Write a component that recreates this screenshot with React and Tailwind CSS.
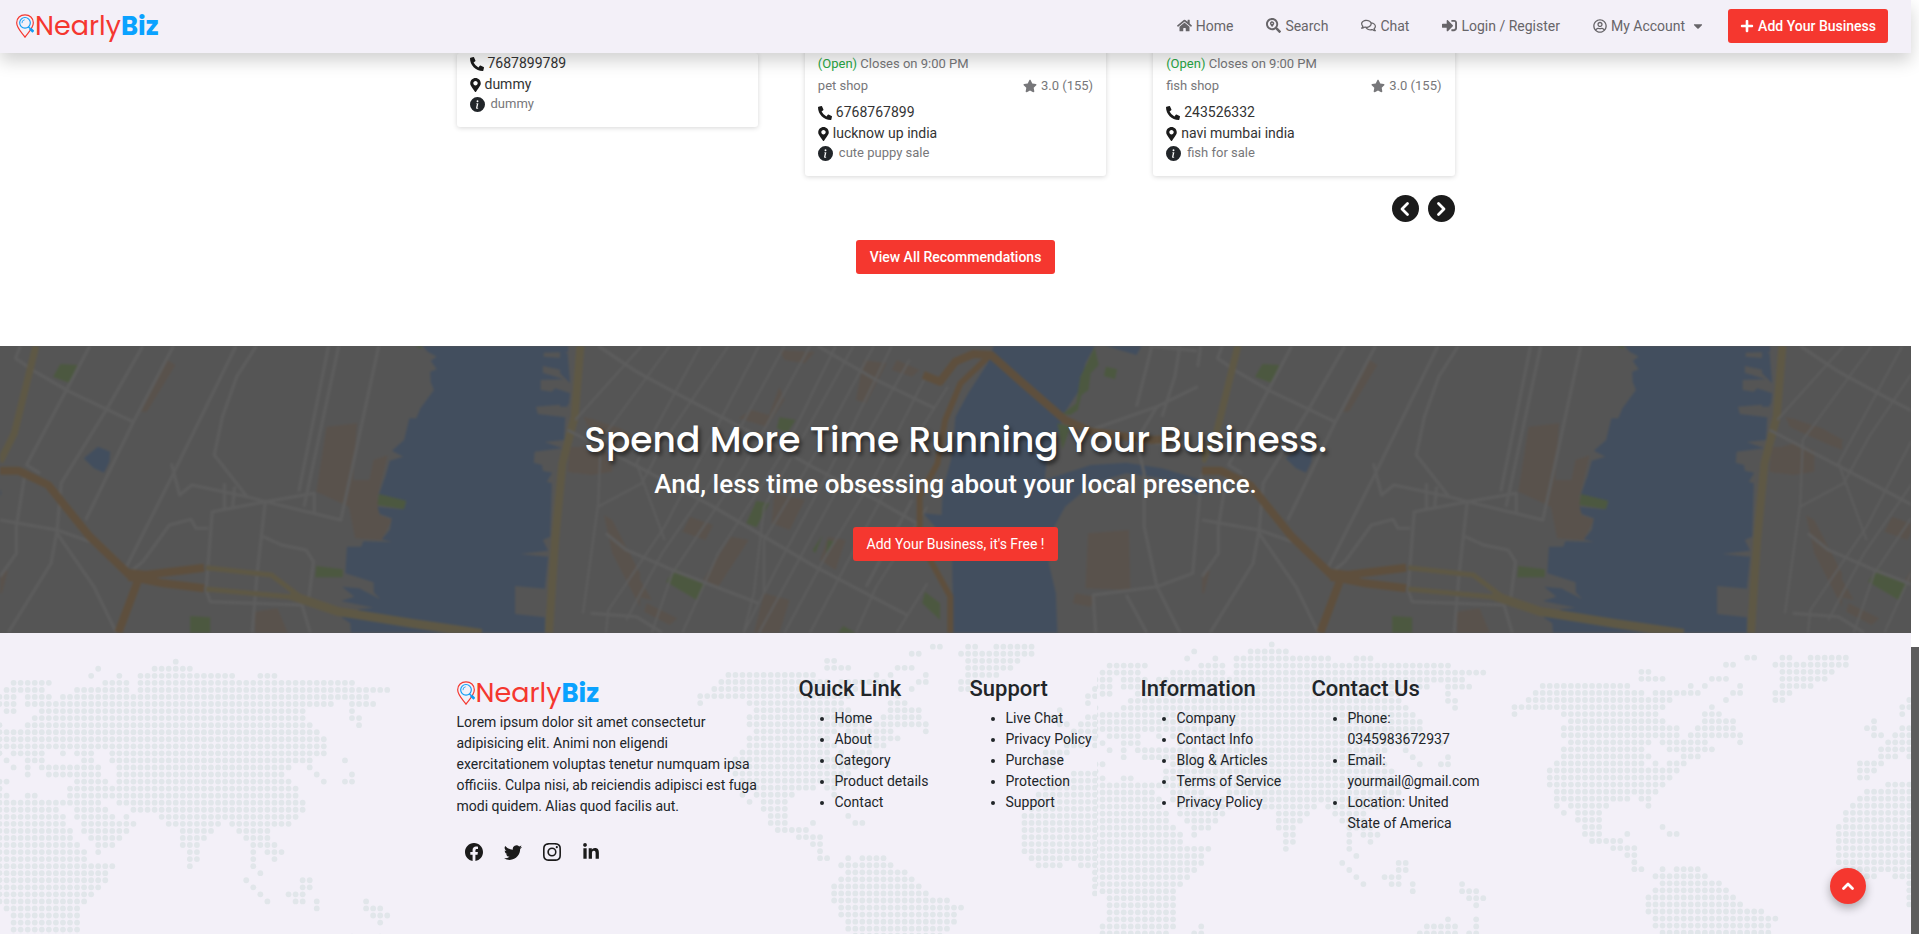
import React from "react";
import {
  FaHome,
  FaSearchLocation,
  FaRegComments,
  FaSignInAlt,
  FaRegUserCircle,
  FaPlus,
  FaPhoneAlt,
  FaMapMarkerAlt,
  FaStar,
  FaLinkedinIn,
  FaCaretDown,
} from "react-icons/fa";
import { BsInfoCircleFill, BsFacebook, BsTwitter, BsInstagram } from "react-icons/bs";

/* ---------- Logo ---------- */

function Logo() {
  return (
    <a href="#home" className="flex items-center" aria-label="NearlyBiz">
      <svg viewBox="0 0 54 71" className="h-6 w-[18px] shrink-0" fill="none">
        <path
          d="M27 69C21 59 2 43 2 26C2 11 13 2 27 2S52 11 52 26C52 43 33 59 27 69Z"
          stroke="#f5372f"
          strokeWidth="3.5"
        />
        <circle cx="27" cy="26" r="16" fill="#f3f0f8" stroke="#109df5" strokeWidth="3.5" />
        <path d="M18 27a9 9 0 0 1 8-10" stroke="#109df5" strokeWidth="2.5" />
        <path d="M37 38l5 5" stroke="#109df5" strokeWidth="4" />
        <path d="M42 43l10 10" stroke="#109df5" strokeWidth="8" />
      </svg>
      <span className="pl-px font-['Poppins','Inter',sans-serif] text-[27px] leading-9 font-normal text-[#f5372f]">
        Nearly<span className="text-[26px] font-bold text-[#0aa2ff]">Biz</span>
      </span>
    </a>
  );
}

/* ---------- Header ---------- */

const navItems = [
  { label: "Home", Icon: FaHome },
  { label: "Search", Icon: FaSearchLocation },
  { label: "Chat", Icon: FaRegComments },
  { label: "Login / Register", Icon: FaSignInAlt },
];

function Header() {
  return (
    <header className="relative z-20 flex h-[53px] items-center justify-between bg-[#f3f0f8] pr-[23px] pb-0.5 pl-4 shadow-[0_8px_16px_rgba(0,0,0,0.18)]">
      <Logo />
      <nav className="flex items-center gap-[33px] text-sm text-[#676569]">
        {navItems.map(({ label, Icon }) => (
          <a key={label} href="#nav" className="flex items-center gap-1">
            <Icon className="size-[15px]" />
            {label}
          </a>
        ))}
        <button type="button" className="flex items-center gap-1">
          <FaRegUserCircle className="size-3.5" />
          My Account
          <FaCaretDown className="ml-0.5 size-3.5" />
        </button>
        <button
          type="button"
          className="-ml-2.5 flex h-[34px] items-center gap-1 rounded-[3px] bg-[#f5372f] px-3 font-medium text-white"
        >
          <FaPlus className="size-3.5" />
          Add Your Business
        </button>
      </nav>
    </header>
  );
}

/* ---------- Cards ---------- */

function Contact({ phone, place, info }) {
  return (
    <div className="text-sm leading-[21px] text-[#333]">
      <p className="flex items-center gap-1">
        <FaPhoneAlt className="size-3.5 text-[#1b1b1b]" />
        {phone}
      </p>
      <p className="flex items-center gap-1">
        <FaMapMarkerAlt className="h-3.5 w-[11px] text-[#1b1b1b]" />
        {place}
      </p>
      <p className="flex items-center gap-1.5 text-[13px] leading-[18px] text-[#77777a]">
        <BsInfoCircleFill className="size-[15px] text-[#212529]" />
        {info}
      </p>
    </div>
  );
}

function Card({ title, kind, ...contact }) {
  return (
    <article className="min-w-0 flex-1 rounded-[3px] bg-white px-[13px] pb-3.5 shadow-[0_1px_5px_rgba(0,0,0,0.16)]">
      {title && (
        <>
          <h3 className="text-lg leading-6 font-medium text-[#1b1b1b]">{title}</h3>
          <p className="text-[13px] leading-[18px] text-[#77777a]">
            <span className="text-[#28a745]">(Open)</span> Closes on 9:00 PM
          </p>
          <div className="mt-1 mb-[7px] flex justify-between text-[13px] leading-[18px] text-[#77777a]">
            <span>{kind}</span>
            <span className="flex items-center gap-1">
              <FaStar className="size-3.5" />
              3.0 (155)
            </span>
          </div>
        </>
      )}
      <Contact {...contact} />
    </article>
  );
}

function Arrow({ d, className }) {
  return (
    <svg
      viewBox="0 0 16 16"
      className={className}
      fill="none"
      stroke="currentColor"
      strokeWidth="2.8"
      strokeLinecap="round"
      strokeLinejoin="round"
    >
      <path d={d} />
    </svg>
  );
}

function Recommendations() {
  return (
    <section className="-mt-[22px] bg-white pb-[72px]">
      <div className="mx-auto w-full max-w-[998px]">
        <div className="grid grid-cols-3 items-start gap-[47px]">
          <div className="flex pt-[22px]">
            <Card phone="7687899789" place="dummy" info="dummy" />
          </div>
          <div className="flex">
            <Card title="puppy shop" kind="pet shop" phone="6768767899" place="lucknow up india" info="cute puppy sale" />
          </div>
          <div className="flex">
            <Card title="fish shop" kind="fish shop" phone="243526332" place="navi mumbai india" info="fish for sale" />
          </div>
        </div>
        <div className="mt-[19px] flex justify-end gap-[9px]">
          <button type="button" aria-label="Previous" className="flex size-[27px] items-center justify-center rounded-full bg-[#1b1b1b] text-white">
            <Arrow d="M10.5 2.5L5 8l5.500 5.500" className="size-4" />
          </button>
          <button type="button" aria-label="Next" className="flex size-[27px] items-center justify-center rounded-full bg-[#1b1b1b] text-white">
            <Arrow d="M5.500 2.500L11 8l-5.500 5.500" className="size-4" />
          </button>
        </div>
        <div className="mt-[18px] flex justify-center">
          <button type="button" className="h-[34px] rounded-[3px] bg-[#f5372f] px-3.5 text-sm font-medium text-white">
            View All Recommendations
          </button>
        </div>
      </div>
    </section>
  );
}

/* ---------- Street map behind the banner ---------- */

const ROAD = "#5d5d5d";
const YELLOW = "#5e5845";
const ORANGE = "#5e4f3d";
const TAN = "#59524c";
const GREEN = "#4c5840";
const WATER = "#424e5e";

function Line({ d, c = ROAD, w = 3 }) {
  return <path d={d} stroke={c} strokeWidth={w} fill="none" strokeLinejoin="round" vectorEffect="non-scaling-stroke" />;
}

function MapTile() {
  return (
    <g>
      <rect width="1202" height="288" fill="#555555" />
      <g transform="scale(0.40816 0.33333) translate(0 -18)">
        <path fill={TAN} d="M800 260L875 250L865 420L905 420L915 360L950 345L925 470L930 525L960 540L935 600L870 595L855 500L775 455ZM625 815L680 805L705 878H625ZM410 60L430 75L360 215L345 215ZM1395 330L1450 310L1500 330V395L1450 405L1390 395ZM1430 230L1520 265L1568 300V330L1440 260ZM0 700L20 690L5 760H0ZM1480 525L1500 540L1568 700V800L1500 640Z" />
        <path fill={WATER} d="M1035 18L1048 35L1070 50L1055 62L1070 88L1054 95L1055 125L1063 150L1030 205L1020 235L1003 235L990 300L960 332L988 350L955 362L945 405L928 465L995 490L985 508L925 500L930 522L960 535L955 570L935 598L960 606L890 604L885 620H850L846 700L915 727L916 758L932 778L880 745L838 740L868 770L835 783L915 803L880 808L835 830L858 850L860 878H1335V832L1262 822V738L1335 746L1343 650L1275 642L1343 632L1330 600L1348 590L1352 430L1340 425L1353 398L1330 392L1328 375L1308 368L1310 335L1378 325L1335 306L1382 300L1385 232L1318 222L1313 200L1394 192L1397 160L1360 145L1352 155L1325 150V120L1382 118L1330 98V78L1384 92L1387 55L1332 50V38L1392 36V18Z" />
        <path fill={WATER} d="M205 355L240 320L270 335L268 365L255 398L230 385ZM0 445V470L3 460Z" />
        <path fill={GREEN} d="M148 72L190 75L172 130L130 110ZM928 462L995 482L990 508L925 495ZM775 678L840 688V712H772ZM466 828L515 832V878H466ZM1018 18H1036L1030 26Z" />
        <Line d="M50 18L38 55L86 95L170 155L325 245" />
        <Line d="M220 18L65 375L98 400M60 410L40 560V640L0 710M350 18L265 200L150 430L140 570L125 670L20 878" />
        <Line d="M425 18L325 250L210 540" />
        <Line d="M578 18L425 400L310 680M628 18L580 110L545 230L525 345L605 470M805 18L732 455M830 18L745 500M928 18L835 540L650 485L520 515L505 750L515 785L740 795L760 878" />
        <Line d="M420 370L440 465L470 435L605 470L650 485L770 460V515M550 430V505M575 440L570 500M650 485L630 700L618 878M645 590L690 615L750 630L768 665L755 790" />
        <Line d="M0 540L140 570L220 605M140 580L230 740L285 878M510 565H480L468 538L415 555L350 665L325 690" />
        <Line c={YELLOW} w={7} d="M88 18L35 280L0 365" />
        <Line c={ORANGE} w={8} d="M0 392H45L118 435L220 590L320 708L355 705L500 683" />
        <Line c={ORANGE} w={8} d="M290 878L340 715L400 730L500 745" />
        <Line c={ORANGE} w={12} d="M315 705L385 715" />
        <Line c={YELLOW} w={5} d="M505 683L665 705L740 775M505 747L720 772" />
        <Line c={YELLOW} w={9} d="M710 765L830 815L1010 850L1180 880" />
        <Line c={YELLOW} w={8} d="M1422 18L1408 230L1378 370L1360 600L1345 878" />
      </g>
      <g transform="translate(560 0) scale(0.5102 0.33333) translate(0 -18)">
        <path fill={TAN} d="M20 320L90 325L80 395L25 400ZM60 235L120 270L160 300L140 320L60 265ZM430 140L440 180L405 260L350 235L375 210L410 225ZM660 60L705 90L690 110L650 90ZM430 30L500 35L480 70L440 60ZM420 460L480 480L450 570L415 550ZM255 530L300 555L285 600L240 575ZM335 590L370 600L310 740L280 720ZM90 530L150 700L180 780L150 770L100 600ZM170 790L230 835L215 855L165 815ZM400 760L450 780L430 878H380ZM1035 580L1115 570L1118 750L1030 745ZM1010 760L1050 770L1040 800L1005 790ZM525 590L560 600L540 690L510 660ZM595 60L640 70L600 190L580 180Z" />
        <path fill={WATER} d="M850 18H1048L1030 70L1018 150L990 215L980 260L975 300L955 350L950 420L1040 375L1110 368L1180 385L1258 420V470L1180 415L1110 400L1045 430L990 500L965 570L958 670L972 760L975 878H770V780L768 640L735 560L712 520L748 525L750 450L768 350L775 230L800 160L838 70ZM1070 18H1140L1130 45ZM0 30L15 40L20 130L0 100ZM0 150L18 160L15 200H0Z" />
        <path fill={GREEN} d="M1048 22L1056 75L1040 100L1036 150L1022 165L1015 210L1000 225L985 222L1012 190L1020 110ZM1070 80L1092 88L1088 118L1066 108ZM430 232L462 240L445 280L425 265ZM385 482L410 490L385 562L365 550ZM225 685L285 735L268 780L208 725ZM515 585L500 640L495 630ZM525 600L540 605L520 655ZM715 755L745 790V840L710 790ZM555 858L580 878H545ZM975 250L1000 260L985 330Z" />
        <Line d="M75 18L150 95L240 170L390 290L500 385L620 480L700 550M505 18L620 120L735 205M15 270L90 330L190 410L300 500L400 590L500 680L680 825M90 580L130 630L220 690L390 790" />
        <Line w={2} d="M160 18L30 240M215 18L80 300L75 490L45 820M275 18L150 370L205 600M330 18L210 290L160 430L75 500M390 18L205 560L95 810L90 878M440 18L290 440L200 640L130 840M490 18L360 380L220 700L180 878M540 18L440 330L310 640L240 878" />
        <Line w={2} d="M575 18L400 500L380 760L360 878M615 18L520 290L400 600V760M650 18L560 300L440 640L360 878M685 60L600 290L500 570L390 878M720 100L620 400L520 650L440 878M760 140L690 310L600 560L490 878M720 500L620 740L580 878M720 730L660 878" />
        <Line d="M60 820L150 830L200 878M690 480L600 740" />
        <Line d="M1160 18L1130 200M1128 290L1145 400V560L1170 740L1215 878M1215 18L1205 110L1180 230M1155 18L1248 32M1256 18L1250 80M1040 270L1170 200L1250 140M1170 200L1130 300L1258 330M1258 400L1240 700L1170 740L1045 765L1050 878M1110 765L1150 878" />
        <Line c={ORANGE} w={8} d="M712 105L745 125L775 65L810 42L845 45L900 120L990 240L1040 275L1160 300L1215 295" />
        <Line c={ORANGE} w={6} d="M840 50L785 130L755 240L740 370L705 470V570L722 650L765 770V878" />
      </g>
    </g>
  );
}

function MapBackdrop() {
  return (
    <svg className="absolute inset-0 size-full blur-[1px]" aria-hidden="true">
      <defs>
        <pattern id="street-map" width="1202" height="288" patternUnits="userSpaceOnUse">
          <MapTile />
        </pattern>
      </defs>
      <rect width="100%" height="100%" fill="url(#street-map)" />
    </svg>
  );
}

function Banner() {
  return (
    <section className="relative overflow-hidden bg-[#555555]">
      <MapBackdrop />
      <div className="relative flex flex-col items-center py-[72px] text-center text-white">
        <h1 className="mb-2 font-['Poppins','Inter',sans-serif] text-[36px] leading-[43px] font-medium [text-shadow:2px_3px_4px_rgba(0,0,0,0.6)]">
          Spend More Time Running Your Business.
        </h1>
        <h2 className="text-[26px] leading-[31px] font-medium">
          And, less time obsessing about your local presence.
        </h2>
        <button type="button" className="mt-[27px] h-[34px] rounded-[3px] bg-[#f5372f] px-3.5 text-sm text-white">
          Add Your Business, it's Free !
        </button>
      </div>
    </section>
  );
}

/* ---------- Dotted world map: each row lists runs of columns ---------- */

const EAST = `25
14 22-27
13 17 20-33 37-39
2-7 15-18 20-50
1-6 11-18 20-55
0-2 4-7 9-52
0-2 4-47 50-53
1-2 6-43 50
5-43 50-51
0 4-44 51
0-45
0-46
0-46
0 2-6 9 11-13 16-46
1 4-6 12-13 16-44 49
2 4 6-14 17-41 44
4 7-14 17-40 45 50
0-1 11-15 17-41 46 49-50
0 10-42
0-1 4-5 10-42
0-14 17-43
0-8 11-15 19-43
0-9 11-16 18 23-42
0-9 12-19 24-31 33-41
0-10 12-18 26-30 34-38
0-10 13-17 26-29 35-38
0-11 14-16 26-28 36-39
0-12 14 27-28 36 38-40
0-12 27-28 36 39
0-16 27 36
0-15 37
0-15 35 43-44
0-14 36 43-44
0-13 37 41-43
0-12 38 42-43 45 52
1-11 45 52-54
2-11 53-55
2-11 54
2-11
2-11 50 54
1-11 15 47-51 54
1-10 14-15 46-51 53-54`;

const WEST = `33-34 38-39 42-47
30-31 37-47
18-19 38-45
18-21 28-30 38-44
4-16 25 27 32 38-42
3-18 20-26 31-32 37-39
2-22 30 37-38 56
0-21 28 55-56
0 7-20 27-29 55
8-21 27-31 51
7-23 26-31 50-51 55-56
7-23 25-32 51-52 54-56
8-19 21-27 32 53-56
7-18 22-28 52-56
7-19 24-26 52-54 56
6-18 20 22-24 49-52
5-23 49-51
5-22 49-50
5-21 53-56
6-20 50-56
6-16 18-19 49-56
6 8-13 19 48-56
7 9-12 47-56
9-12 47-56
10-12 21 46-56
10-12 16 22-23 46-56
11-15 46-56
14-17 46-56
16-17 46-56
17 46-56
17-18 21 23-26 47-56
20-27 48-51 54-56
21-29 56
20-30 56
19-31 56
19-32 56
19-35
20-37
20-36
21-36
21-35
22-34`;

const PITCH = 7.05;

function Dots({ rows, x, y, clipPath }) {
  const dots = [];
  rows.split("\n").forEach((row, r) => {
    row.split(" ").forEach((run) => {
      const [from, to = from] = run.split("-").map(Number);
      for (let c = from; c <= to; c++) {
        dots.push(<circle key={`${r}-${c}`} cx={x + c * PITCH} cy={y + r * PITCH} r="2.9" />);
      }
    });
  });
  return <g clipPath={clipPath}>{dots}</g>;
}

function WorldMap() {
  return (
    <svg className="absolute inset-0 size-full" fill="#e1e6ea" aria-hidden="true">
      <defs>
        <clipPath id="world-east">
          <rect x="1097" width="900" height="400" />
        </clipPath>
        <clipPath id="world-west">
          <rect x="600" width="497" height="400" />
        </clipPath>
      </defs>
      <Dots rows={EAST} x={-0.5} y={28.7} />
      <Dots rows={WEST} x={700.2} y={13.7} clipPath="url(#world-west)" />
      <Dots rows={EAST} x={1095.5} y={11.4} clipPath="url(#world-east)" />
      <Dots rows={WEST} x={1514.5} y={24.7} />
    </svg>
  );
}

/* ---------- Footer ---------- */

const columns = [
  { title: "Quick Link", items: ["Home", "About", "Category", "Product details", "Contact"] },
  { title: "Support", items: ["Live Chat", "Privacy Policy", "Purchase", "Protection", "Support"] },
  { title: "Information", items: ["Company", "Contact Info", "Blog & Articles", "Terms of Service", "Privacy Policy"] },
  {
    title: "Contact Us",
    items: ["Phone: 0345983672937", "Email: yourmail@gmail.com", "Location: United State of America"],
  },
];

const socials = [
  { label: "Facebook", Icon: BsFacebook },
  { label: "Twitter", Icon: BsTwitter },
  { label: "Instagram", Icon: BsInstagram },
  { label: "LinkedIn", Icon: FaLinkedinIn },
];

function Footer() {
  return (
    <footer className="relative flex-1 overflow-hidden bg-[#f3f0f8]">
      <WorldMap />
      <div className="relative mx-auto grid w-full max-w-[1026px] grid-cols-6 pt-[42px] pb-[72px] text-sm leading-[21px] text-[#212529]">
        <div className="col-span-2 pr-6 pl-3.5">
          <Logo />
          <p className="mt-px">
            Lorem ipsum dolor sit amet consectetur adipisicing elit. Animi non eligendi exercitationem voluptas
            tenetur numquam ipsa officiis. Culpa nisi, ab reiciendis adipisci est fuga modi quidem. Alias quod
            facilis aut.
          </p>
          <div className="mt-[26px] flex gap-[21px] pl-2 text-[#1b1b1b]">
            {socials.map(({ label, Icon }) => (
              <a key={label} href="#social" aria-label={label}>
                <Icon className="size-[18px]" />
              </a>
            ))}
          </div>
        </div>
        {columns.map(({ title, items }) => (
          <div key={title} className="min-w-0 pl-3.5">
            <h3 className="mt-px mb-1.5 text-[22px] leading-[26px] font-medium">{title}</h3>
            <ul className="list-disc pl-9">
              {items.map((item) => (
                <li key={item}>{title === "Contact Us" ? item : <a href="#footer">{item}</a>}</li>
              ))}
            </ul>
          </div>
        ))}
      </div>
    </footer>
  );
}

export default function App() {
  return (
    <div className="flex h-screen overflow-hidden bg-white font-['Roboto',sans-serif]">
      <div className="relative z-10 flex min-w-0 flex-1 flex-col">
        <Header />
        <Recommendations />
        <Banner />
        <Footer />
      </div>
      <div className="flex w-2 flex-col justify-end bg-white">
        <div className="h-[287px] bg-[#5d5d5d]" />
      </div>
      <button
        type="button"
        aria-label="Back to top"
        className="fixed right-[53px] bottom-[30px] z-30 flex size-9 items-center justify-center rounded-full bg-[#f5372f] text-white shadow-[0_4px_10px_rgba(0,0,0,0.3)]"
      >
        <Arrow d="M3.500 10.500L8 6l4.500 4.500" className="size-4" />
      </button>
    </div>
  );
}
